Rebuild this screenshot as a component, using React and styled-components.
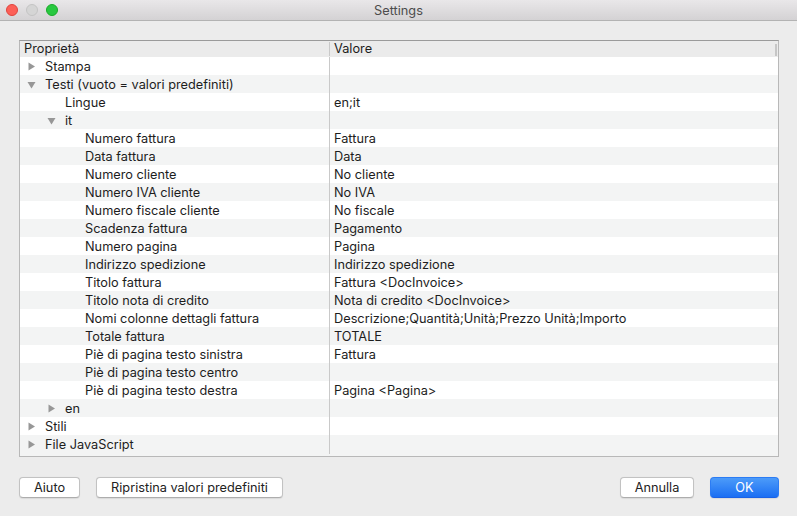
import React from 'react'
import styled, {createGlobalStyle} from 'styled-components'

const GlobalStyle = createGlobalStyle`
	html, body {
		margin: 0;
		padding: 0;
		background: #ececec;
	}
	body {
		font-family: Inter, "Liberation Sans", Arial, sans-serif;
		color: #1d1d1d;
	}
`

const rows = [
	{label: 'Stampa', level: 0, arrow: 'closed'},
	{label: 'Testi (vuoto = valori predefiniti)', level: 0, arrow: 'open'},
	{label: 'Lingue', level: 1, value: 'en;it'},
	{label: 'it', level: 1, arrow: 'open'},
	{label: 'Numero fattura', level: 2, value: 'Fattura'},
	{label: 'Data fattura', level: 2, value: 'Data'},
	{label: 'Numero cliente', level: 2, value: 'No cliente'},
	{label: 'Numero IVA cliente', level: 2, value: 'No IVA'},
	{label: 'Numero fiscale cliente', level: 2, value: 'No fiscale'},
	{label: 'Scadenza fattura', level: 2, value: 'Pagamento'},
	{label: 'Numero pagina', level: 2, value: 'Pagina'},
	{label: 'Indirizzo spedizione', level: 2, value: 'Indirizzo spedizione'},
	{label: 'Titolo fattura', level: 2, value: 'Fattura <DocInvoice>'},
	{label: 'Titolo nota di credito', level: 2, value: 'Nota di credito <DocInvoice>'},
	{label: 'Nomi colonne dettagli fattura', level: 2, value: 'Descrizione;Quantità;Unità;Prezzo Unità;Importo'},
	{label: 'Totale fattura', level: 2, value: 'TOTALE'},
	{label: 'Piè di pagina testo sinistra', level: 2, value: 'Fattura'},
	{label: 'Piè di pagina testo centro', level: 2},
	{label: 'Piè di pagina testo destra', level: 2, value: 'Pagina <Pagina>'},
	{label: 'en', level: 1, arrow: 'closed'},
	{label: 'Stili', level: 0, arrow: 'closed'},
	{label: 'File JavaScript', level: 0, arrow: 'closed'},
]

const Window = styled.div`
	width: 797px;
	height: 516px;
	display: flex;
	flex-direction: column;
	background: #ececec;
	overflow: hidden;
`

const TitleBar = styled.div`
	height: 20px;
	display: grid;
	grid-template-columns: 80px 1fr 80px;
	align-items: center;
	background: linear-gradient(#e9e7e9, #d4d2d4);
	border-bottom: 1px solid #b3b3b3;
`

const Lights = styled.div`
	display: flex;
	gap: 8px;
	padding-left: 6px;
`

const Light = styled.span`
	width: 12px;
	height: 12px;
	border-radius: 50%;
	box-sizing: border-box;
	background: ${p => p.color};
	border: 1px solid ${p => p.edge};
`

const Title = styled.div`
	text-align: center;
	font-size: 12.75px;
	color: #4c4c4c;
`

const Content = styled.div`
	flex: 1;
	display: flex;
	flex-direction: column;
	padding: 19px 18px 0 19px;
`

const Frame = styled.div`
	position: relative;
	height: 417px;
	box-sizing: border-box;
	border: 1px solid #b8b8b8;
	border-top-color: #9a9a9a;
	background: #f3f4f4;
	display: flex;
	flex-direction: column;
`

const Scroller = styled.span`
	position: absolute;
	right: 1px;
	top: 3px;
	width: 2px;
	height: 12px;
	background: #c6c6c6;
`

const Header = styled.div`
	height: 16px;
	display: grid;
	grid-template-columns: 309px 1fr;
	background: #ebebeb;
	font-size: 12.75px;
	line-height: 16px;
`

const HeadCell = styled.div`
	padding-left: ${p => p.$pad}px;
	border-left: ${p => (p.$divider ? '1px solid #c9c9c9' : 'none')};
	margin: ${p => (p.$divider ? '1px 0' : '0')};
	line-height: ${p => (p.$divider ? '14px' : '16px')};
`

const Body = styled.div`
	display: flex;
	flex-direction: column;
`

const Row = styled.div`
	height: 18px;
	display: grid;
	grid-template-columns: 309px 1fr;
	background: ${p => (p.$odd ? '#f3f4f4' : '#ffffff')};
	font-size: 12.75px;
	line-height: 19px;
`

const NameCell = styled.div`
	display: flex;
	align-items: center;
	padding-left: ${p => 4 + p.$level * 20}px;
	white-space: nowrap;
`

const ArrowBox = styled.span`
	width: 21px;
	height: 18px;
	display: flex;
	align-items: center;
	padding-left: 3px;
	box-sizing: border-box;
`

const ValueCell = styled.div`
	border-left: 1px solid #c9c9c9;
	padding-left: 4px;
	white-space: nowrap;
`

const Footer = styled.div`
	display: flex;
	align-items: center;
	padding-top: 20px;
	gap: 16px;
`

const Spacer = styled.div`
	flex: 1;
`

const Button = styled.button`
	height: 21px;
	padding: 0;
	width: ${p => p.$w}px;
	font-family: Inter, "Liberation Sans", Arial, sans-serif;
	font-size: 12.75px;
	color: ${p => (p.$primary ? '#ffffff' : '#222222')};
	border-radius: 4px;
	border: 1px solid ${p => (p.$primary ? '#2c7cf4' : '#c2c2c2')};
	border-bottom-color: ${p => (p.$primary ? '#1a62e6' : '#adadad')};
	background: ${p => (p.$primary ? 'linear-gradient(#4c9bf9, #1b6ff3)' : '#ffffff')};
	box-shadow: 0 0.5px 1px rgba(0, 0, 0, 0.08);
`

const Arrow = ({open}) => (
	<svg width="9" height="9" viewBox="0 0 9 9">
		{open
			? <polygon points="0.5,2 8.5,2 4.5,8.5" fill="#979797"/>
			: <polygon points="1.5,0.5 8,4.5 1.5,8.5" fill="#979797"/>}
	</svg>
)

export default function App() {
	return (
		<Window>
			<GlobalStyle/>
			<TitleBar>
				<Lights>
					<Light color="#fc5f57" edge="#e0443e"/>
					<Light color="#d5d5d5" edge="#c4c4c4"/>
					<Light color="#28c840" edge="#1aab29"/>
				</Lights>
				<Title>Settings</Title>
				<span/>
			</TitleBar>
			<Content>
				<Frame>
					<Header>
						<HeadCell $pad={4}>Proprietà</HeadCell>
						<HeadCell $pad={4} $divider>Valore</HeadCell>
					</Header>
					<Body>
						{rows.map((r, i) => (
							<Row key={i} $odd={i % 2 === 1}>
								<NameCell $level={r.level}>
									<ArrowBox>{r.arrow && <Arrow open={r.arrow === 'open'}/>}</ArrowBox>
									{r.label}
								</NameCell>
								<ValueCell>{r.value}</ValueCell>
							</Row>
						))}
					</Body>
					<Scroller/>
				</Frame>
				<Footer>
					<Button $w={61}>Aiuto</Button>
					<Button $w={187}>Ripristina valori predefiniti</Button>
					<Spacer/>
					<Button $w={74}>Annulla</Button>
					<Button $w={69} $primary>OK</Button>
				</Footer>
			</Content>
		</Window>
	)
}
